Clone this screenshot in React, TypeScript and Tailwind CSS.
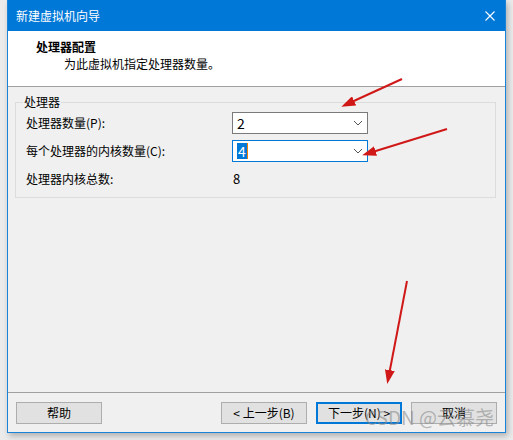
const font = { fontFamily: '"Microsoft YaHei UI", "Noto Sans CJK SC", "Noto Sans", sans-serif' }

function Chevron() {
  return (
    <svg width="10" height="6" viewBox="0 0 10 6" className="shrink-0">
      <path d="M1 1 L5 5 L9 1" fill="none" stroke="#555" strokeWidth="1" />
    </svg>
  )
}

function Combo({ value, focused }: { value: string; focused?: boolean }) {
  return (
    <div
      className={`flex h-[22px] w-[136px] items-center justify-between bg-white pl-[4px] pr-[4px] ${
        focused ? 'border border-[#0078d7]' : 'border border-[#7a7a7a]'
      }`}
    >
      {focused ? (
        <span className="flex items-center">
          <span className="bg-[#0078d7] px-[1px] text-[14px] leading-[16px] text-white">{value}</span>
          <span className="h-[16px] w-[1px] bg-[#f08000]" />
        </span>
      ) : (
        <span className="text-[14px] leading-[16px] text-black">{value}</span>
      )}
      <Chevron />
    </div>
  )
}

function Btn({ children, primary }: { children: React.ReactNode; primary?: boolean }) {
  return (
    <button
      className={`flex h-[22px] w-[86px] items-center justify-center bg-[#e1e1e1] text-[12px] text-black ${
        primary ? 'border-2 border-[#0078d7]' : 'border border-[#adadad]'
      }`}
    >
      {children}
    </button>
  )
}

export default function App() {
  return (
    <div className="relative h-[440px] w-[513px] overflow-hidden bg-[#ebebeb]" style={font}>
      <div className="ml-[7px] flex h-[433px] w-[499px] flex-col border-x border-b border-[#1883d7] bg-[#f0f0f0] shadow-[2px_3px_6px_rgba(0,0,0,0.25)]">
        {/* title bar */}
        <div className="flex h-[31px] items-center justify-between bg-[#0078d7] pl-[8px] pr-[10px] text-white">
          <span className="text-[12px]">新建虚拟机向导</span>
          <svg width="10" height="10" viewBox="0 0 10 10">
            <path d="M0.5 0.5 L9.5 9.5 M9.5 0.5 L0.5 9.5" stroke="white" strokeWidth="1.1" />
          </svg>
        </div>

        {/* header */}
        <div className="h-[56px] border-b border-[#a0a0a0] bg-white pl-[28px] pt-[7px]">
          <div className="text-[12px] font-bold leading-[18px] text-black">处理器配置</div>
          <div className="pl-[28px] text-[12px] leading-[16px] text-black">为此虚拟机指定处理器数量。</div>
        </div>

        {/* body */}
        <div className="flex-1 pl-[7px] pt-[7px]">
          <fieldset className="h-[104px] w-[481px] border border-[#dcdcdc] px-[10px]">
            <legend className="ml-[-3px] px-[1px] text-[12px] leading-[16px] text-black">处理器</legend>
            <div className="mt-[2px] grid grid-cols-[206px_136px] items-center text-[12px] text-black">
              <span className="leading-[22px]">处理器数量(P):</span>
              <Combo value="2" />
              <span className="mt-[6px] leading-[22px]">每个处理器的内核数量(C):</span>
              <div className="mt-[6px]">
                <Combo value="4" focused />
              </div>
              <span className="mt-[6px] leading-[22px]">处理器内核总数:</span>
              <span className="mt-[6px] pl-[1px] text-[13px] leading-[22px]">8</span>
            </div>
          </fieldset>
        </div>

        {/* footer */}
        <div className="h-[40px] border-t border-[#a0a0a0] pt-[9px]">
          <div className="flex pl-[8px] pr-[8px]">
            <Btn>帮助</Btn>
            <div className="ml-auto flex gap-[9px]">
              <Btn>&lt; 上一步(B)</Btn>
              <Btn primary>下一步(N) &gt;</Btn>
              <Btn>取消</Btn>
            </div>
          </div>
        </div>
      </div>

      {/* red annotation arrows */}
      <svg className="pointer-events-none absolute inset-0" width="513" height="440">
        <defs>
          <marker id="ah" markerWidth="7" markerHeight="5" refX="5" refY="2.5" orient="auto" markerUnits="strokeWidth">
            <path d="M0 0 L7 2.5 L0 5 Z" fill="#d01818" />
          </marker>
        </defs>
        <line x1="402" y1="79" x2="345" y2="105" stroke="#d01818" strokeWidth="2" markerEnd="url(#ah)" />
        <line x1="447" y1="129" x2="366" y2="154" stroke="#d01818" strokeWidth="2" markerEnd="url(#ah)" />
        <line x1="407" y1="281" x2="388" y2="380" stroke="#d01818" strokeWidth="2" markerEnd="url(#ah)" />
      </svg>

      {/* watermark */}
      <div className="pointer-events-none absolute left-[365px] top-[405px] text-[19px] leading-[24px] text-[#8a8a8a]/60">
        CSDN @云慕尧
      </div>
    </div>
  )
}
